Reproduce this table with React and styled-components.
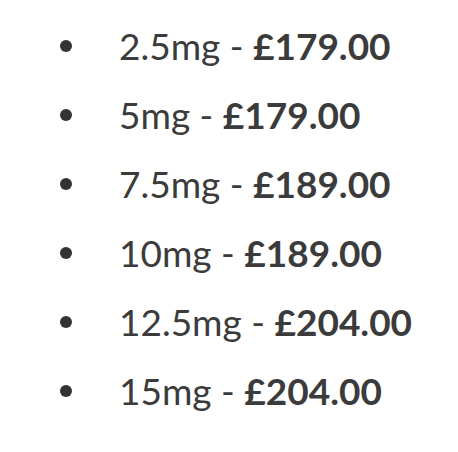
import React from "react";
import styled, { createGlobalStyle } from "styled-components";

const GlobalStyle = createGlobalStyle`
  html, body {
    margin: 0;
    padding: 0;
    background: #ffffff;
  }
`;

const PriceList = styled.ul`
  list-style: none;
  margin: 0;
  padding: 11px 0 0 60px;
  font-family: Lato, "Liberation Sans", sans-serif;
  font-size: 37px;
  color: #3b3b3b;
`;

const Item = styled.li`
  display: flex;
  align-items: center;
  height: 69px;
`;

const Dot = styled.span`
  width: 12px;
  height: 12px;
  border-radius: 50%;
  background: #333333;
  margin-right: 47px;
  flex-shrink: 0;
`;

const Price = styled.strong`
  font-weight: 700;
`;

const doses = [
  { dose: "2.5mg", price: "£179.00" },
  { dose: "5mg", price: "£179.00" },
  { dose: "7.5mg", price: "£189.00" },
  { dose: "10mg", price: "£189.00" },
  { dose: "12.5mg", price: "£204.00" },
  { dose: "15mg", price: "£204.00" },
];

export default function App() {
  return (
    <>
      <GlobalStyle />
      <PriceList>
        {doses.map((d) => (
          <Item key={d.dose}>
            <Dot />
            <span>
              {d.dose} - <Price>{d.price}</Price>
            </span>
          </Item>
        ))}
      </PriceList>
    </>
  );
}
